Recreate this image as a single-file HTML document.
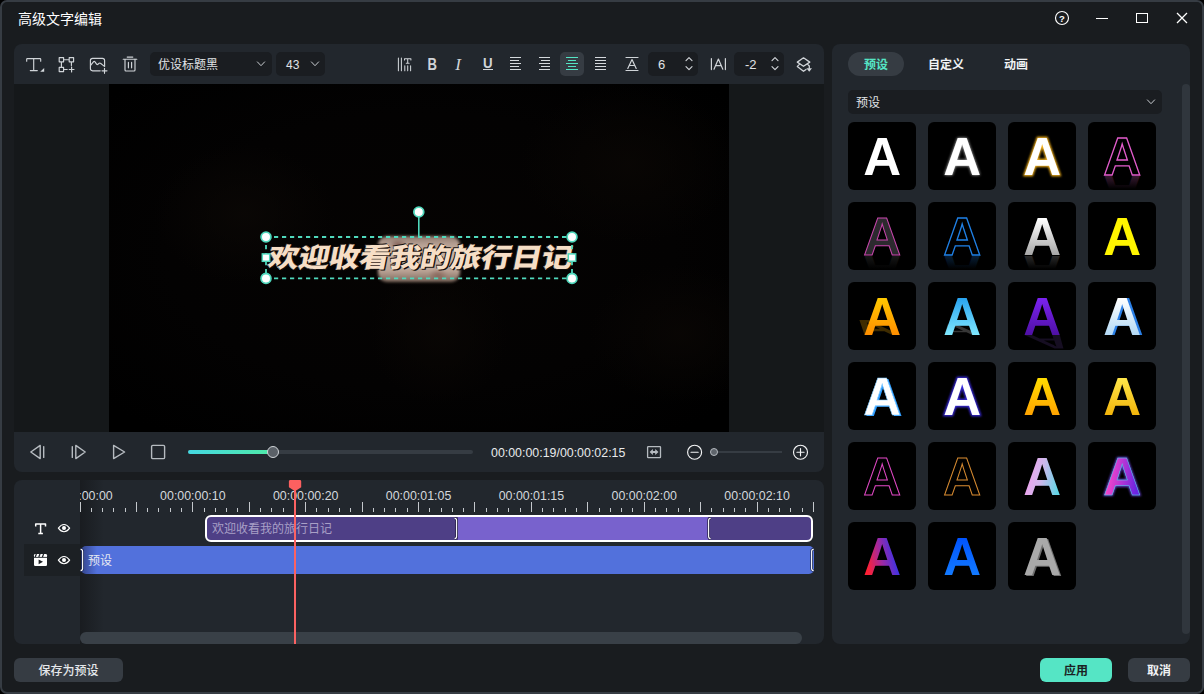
<!DOCTYPE html><html lang="zh-CN"><head><meta charset="utf-8"><title>高级文字编辑</title><style>
*{box-sizing:border-box;margin:0;padding:0}
html,body{width:1204px;height:694px;overflow:hidden;background:#000;}
body{font-family:"Liberation Sans","Noto Sans CJK SC",sans-serif;color:#e8eaec;font-size:12px;position:relative}
.abs{position:absolute}
#win{position:absolute;left:0;top:0;width:1204px;height:694px;background:#191c1f;border:2px solid #363c43;border-radius:7px;overflow:hidden}
.panel{position:absolute;background:#22272d;border-radius:8px}
.t{position:absolute;white-space:nowrap;line-height:1}
svg{position:absolute;overflow:visible}
.ic{stroke:#d0d4d8;fill:none;stroke-width:1.15;stroke-linecap:round;stroke-linejoin:round}
.pb .ic{stroke:#b6bbc0;stroke-width:1.4}
.dd{position:absolute;background:#1a1d21;border-radius:5px}
.tile{position:absolute;width:68px;height:68px;background:#000;border-radius:6px;overflow:hidden}
.tile .a{position:absolute;left:0;top:0;width:68px;height:68px;font:bold 50px/68px "Liberation Sans",sans-serif;text-align:center;color:#fff}
.btn{position:absolute;height:24px;border-radius:6px;font-weight:bold;background:#363c43;color:#f0f2f4;font-size:12px;line-height:24px;padding-top:1px;text-align:center}
</style></head><body>
<div id="win"></div>
<div class="t" style="left:18px;top:12px;font-size:14px;color:#fff">高级文字编辑</div>
<svg style="left:1054px;top:10px" width="16" height="16" viewBox="0 0 16 16"><circle cx="8" cy="8" r="6.5" class="ic" style="stroke:#fff"/><text x="8" y="11.6" font-size="9.5" font-weight="bold" text-anchor="middle" fill="#fff" font-family="Liberation Sans, sans-serif">?</text></svg>
<div class="abs" style="left:1096px;top:18px;width:12px;height:1.4px;background:#fff"></div>
<div class="abs" style="left:1136px;top:13px;width:12px;height:10px;border:1.3px solid #fff"></div>
<svg style="left:1176px;top:12px" width="12" height="12" viewBox="0 0 12 12"><path d="M1 1L11 11M11 1L1 11" stroke="#fff" stroke-width="1.3" fill="none"/></svg>
<div class="panel" style="left:14px;top:44px;width:810px;height:428px;overflow:hidden">
<div class="abs" style="left:0;top:40px;width:810px;height:348px;background:#15181a"></div>
<div class="abs" id="video" style="left:95px;top:40px;width:620px;height:348px;background:#000;overflow:hidden">
<div class="abs" style="left:0;top:0;width:620px;height:348px;background:radial-gradient(ellipse 90px 70px at 135px 130px,rgba(10,7,5,.9),rgba(0,0,0,0)),radial-gradient(ellipse 110px 80px at 520px 80px,rgba(9,6,4,.9),rgba(0,0,0,0)),radial-gradient(ellipse 70px 70px at 330px 250px,rgba(9,6,4,.9),rgba(0,0,0,0)),radial-gradient(ellipse 90px 70px at 570px 250px,rgba(9,6,4,.9),rgba(0,0,0,0)),radial-gradient(ellipse 420px 230px at 50% 48%,#050302 0,#030202 60%,#000 100%)"></div>
<div class="abs" style="left:269px;top:152px;width:82px;height:46px;border-radius:9px;background:radial-gradient(ellipse 9px 6px at 20px 9px,rgba(110,72,64,.75),rgba(110,72,64,0)),radial-gradient(ellipse 10px 6px at 60px 39px,rgba(120,80,70,.7),rgba(120,80,70,0)),linear-gradient(180deg,#8f7a6e 0,#b9a396 20%,#cbb4a6 50%,#bca597 75%,#7d685c 100%);filter:blur(1.6px)"></div>
<div class="t" id="vt" style="left:157px;top:156px;font-family:'Liberation Sans','Noto Sans CJK SC',sans-serif;font-weight:900;font-size:30.6px;letter-spacing:-0.2px;color:#f6dec6;-webkit-text-stroke:0.9px #f6dec6;paint-order:stroke fill;transform-origin:0 100%;transform:skewX(-11deg) scaleY(0.87);text-shadow:1.6px 1.8px 0 #120e0b,0 0 1px #120e0b,-0.8px -0.8px 0 #120e0b">欢迎收看我的旅行日记</div>
<svg style="left:0px;top:0px" width="620" height="348" viewBox="0 0 620 348" ><path d="M157 153H463M157 194.4H463M157 153V194.4M463 153V194.4" stroke="#4fd8bc" stroke-width="1.8" stroke-dasharray="4.2 3.8" fill="none"/><path d="M309.8 128V153" stroke="#4fd8bc" stroke-width="1.6"/><circle cx="157" cy="153" r="4.9" fill="#fff" stroke="#4fd8bc" stroke-width="1.8"/><circle cx="463" cy="153" r="4.9" fill="#fff" stroke="#4fd8bc" stroke-width="1.8"/><circle cx="157" cy="194.4" r="4.9" fill="#fff" stroke="#4fd8bc" stroke-width="1.8"/><circle cx="463" cy="194.4" r="4.9" fill="#fff" stroke="#4fd8bc" stroke-width="1.8"/><circle cx="309.8" cy="128" r="4.9" fill="#fff" stroke="#4fd8bc" stroke-width="1.8"/><rect x="153.3" y="169.9" width="7.4" height="7.4" fill="#fff" stroke="#4fd8bc" stroke-width="1.5"/><rect x="459.3" y="169.9" width="7.4" height="7.4" fill="#fff" stroke="#4fd8bc" stroke-width="1.5"/></svg>
</div>
<svg style="left:10px;top:10px" width="22" height="22" viewBox="0 0 22 22" ><path class="ic" d="M2.7 7.2V5.2Q2.7 4.6 3.4 4.6H16Q16.7 4.6 16.7 5.2V7.2M9.7 4.6V16.6M6.3 16.6H13.3"/><path d="M20.2 14V17.8H16.2Z" fill="#d5d9dd"/></svg>
<svg style="left:42px;top:10px" width="22" height="22" viewBox="0 0 22 22" ><path class="ic" d="M3.2 3.6h4.4v4.2h-4.4zM13.2 3.6h4.4v4.2h-4.4zM3.2 13.4h4.4v4.2h-4.4zM7.6 5.7H13.2M5.4 7.8V13.4M15.4 7.8V11.6M7.6 15.5H11.2M13.2 15.5H18M15.6 13.1V17.9"/></svg>
<svg style="left:74px;top:10px" width="22" height="22" viewBox="0 0 22 22" ><path class="ic" d="M12.2 16.8H4.6Q2.4 16.8 2.4 14.6V6.6Q2.4 4.4 4.6 4.4H14.4Q16.6 4.4 16.6 6.6V12.4M2.6 11.4L5.6 7.6Q6.2 7 6.8 7.7L8.6 10.2Q9.2 10.9 9.9 10.3L11.2 9.2Q11.9 8.7 12.5 9.3L16.4 12.4M14 16.8H19M16.5 14.3V19.3"/></svg>
<svg style="left:106px;top:10px" width="22" height="22" viewBox="0 0 22 22" ><path class="ic" d="M3.2 5.2H16.8M7.2 3.1H12.8M5 5.2V16Q5 17 6 17H14Q15 17 15 16V5M8.4 8.4V13.8M11.6 8.4V13.8"/></svg>
<div class="dd" style="left:136px;top:8px;width:122px;height:24px"></div>
<div class="t" style="left:144px;top:15px;font-size:12px;color:#e0e3e6">优设标题黑</div>
<svg style="left:241.7px;top:15px" width="10" height="10" viewBox="0 0 10 10" ><path class="ic" d="M1.4 2.9L5 6.7L8.6 2.9" style="stroke-width:1;stroke:#c8ccd0"/></svg>
<div class="dd" style="left:262px;top:8px;width:49px;height:24px"></div>
<div class="t" style="left:272px;top:15px;font-size:12px;color:#e0e3e6">43</div>
<svg style="left:295.8px;top:15px" width="10" height="10" viewBox="0 0 10 10" ><path class="ic" d="M1.4 2.9L5 6.7L8.6 2.9" style="stroke-width:1;stroke:#c8ccd0"/></svg>
<svg style="left:380px;top:10px" width="22" height="22" viewBox="0 0 22 22" ><path class="ic" d="M4.4 4V16.8M7.4 4V16.8M10.5 6V4.7H16.9V6M13.7 4.7V9.3M12.3 9.3H15.1M10.8 11.7V16.8M13.7 11.7V16.8M16.6 11.7V16.8" style="stroke-width:1.05"/></svg>
<svg style="left:410px;top:10px" width="16" height="22" viewBox="0 0 16 22" ><text x="3.4" y="15.9" font-family="Liberation Sans, sans-serif" font-weight="bold" font-size="16.4" fill="#d0d4d8" transform="translate(3.4 0) scale(0.8 1) translate(-3.4 0)">B</text></svg>
<svg style="left:438px;top:10px" width="16" height="22" viewBox="0 0 16 22" ><text x="3.2" y="15.9" font-family="Liberation Serif, serif" font-style="italic" font-size="17" fill="#d0d4d8">I</text></svg>
<svg style="left:466px;top:10px" width="16" height="22" viewBox="0 0 16 22" ><text x="3" y="13.8" font-family="Liberation Sans, sans-serif" font-weight="bold" font-size="14" fill="#d0d4d8" transform="translate(3 0) scale(0.95 1) translate(-3 0)">U</text></svg>
<div class="abs" style="left:469px;top:25px;width:10px;height:1px;background:#d0d4d8"></div>
<svg style="left:495px;top:10px" width="13" height="22" viewBox="0 0 13 22" ><path d="M1 3.5H12M1 6.5H10M1 9.5H12M1 12.5H10M1 15.5H12" stroke="#d5d9dd" stroke-width="1" fill="none" shape-rendering="crispEdges"/></svg>
<svg style="left:524px;top:10px" width="13" height="22" viewBox="0 0 13 22" ><path d="M1 3.5H12M3 6.5H12M1 9.5H12M3 12.5H12M1 15.5H12" stroke="#d5d9dd" stroke-width="1" fill="none" shape-rendering="crispEdges"/></svg>
<div class="abs" style="left:546px;top:8px;width:24px;height:24px;border-radius:5px;background:#363c43"></div>
<svg style="left:551px;top:10px" width="14" height="22" viewBox="0 0 14 22" ><path d="M1 3.5H13M3 6.5H11M1 9.5H13M3 12.5H11M1 15.5H13" stroke="#55e5c5" stroke-width="1" fill="none" shape-rendering="crispEdges"/></svg>
<svg style="left:580px;top:10px" width="13" height="22" viewBox="0 0 13 22" ><path d="M1 3.5H12M1 6.5H12M1 9.5H12M1 12.5H12M1 15.5H12" stroke="#d5d9dd" stroke-width="1" fill="none" shape-rendering="crispEdges"/></svg>
<svg style="left:608px;top:10px" width="20" height="22" viewBox="0 0 20 22" ><path class="ic" d="M4 3.5H16M4 16.5H16M5.8 14.4L10 5.6L14.2 14.4M7.3 11.5H12.7" style="stroke-width:1.2"/></svg>
<div class="dd" style="left:634px;top:8px;width:50px;height:24px"></div>
<div class="t" style="left:644px;top:14px;font-size:13px;color:#e0e3e6">6</div>
<svg style="left:670px;top:10px" width="10" height="22" viewBox="0 0 10 22" ><path class="ic" d="M2 6.6L5 3.6L8 6.6M2 12.6L5 15.6L8 12.6"/></svg>
<svg style="left:694px;top:10px" width="20" height="22" viewBox="0 0 20 22" ><path class="ic" d="M3.4 4.6V15.6M17.4 4.6V15.6M6 15.2L10.4 5L14.8 15.2M7.6 11.6H13.2" style="stroke-width:1.2"/></svg>
<div class="dd" style="left:720px;top:8px;width:50px;height:24px"></div>
<div class="t" style="left:731px;top:14px;font-size:13px;color:#e0e3e6">-2</div>
<svg style="left:756px;top:10px" width="10" height="22" viewBox="0 0 10 22" ><path class="ic" d="M2 6.6L5 3.6L8 6.6M2 12.6L5 15.6L8 12.6"/></svg>
<svg style="left:780px;top:10px" width="22" height="22" viewBox="0 0 22 22" ><path class="ic" d="M3.3 8.1L9.5 3.8L15.8 8.1L9.5 12.3ZM5.2 10.6L3.3 12.4L9.5 17.3L12 15.4M14 10.6L15.3 12V14.4" style="stroke-width:1.3"/><path d="M12.4 14.3H18L15.2 17.8Z" fill="#d0d4d8"/></svg>
<div class="pb">
<svg style="left:12px;top:397px" width="22" height="22" viewBox="0 0 22 22" ><path class="ic" d="M14.2 4.4V17.6L4.8 11ZM17.7 5.6V16.4"/></svg>
<svg style="left:53px;top:397px" width="22" height="22" viewBox="0 0 22 22" ><path class="ic" d="M8.8 4.4V17.6L18.2 11ZM5.3 5.6V16.4"/></svg>
<svg style="left:93px;top:397px" width="22" height="22" viewBox="0 0 22 22" ><path class="ic" d="M6.6 4.4V17.6L17.6 11Z"/></svg>
<svg style="left:133px;top:397px" width="22" height="22" viewBox="0 0 22 22" ><rect class="ic" x="4.6" y="4.4" width="13" height="13.2" rx="1.2"/></svg>
</div>
<div class="abs" style="left:174px;top:406px;width:285px;height:4px;border-radius:2px;background:#363c43"></div>
<div class="abs" style="left:174px;top:406px;width:86px;height:4px;border-radius:2px;background:linear-gradient(90deg,#45d8e2,#4feaa6)"></div>
<div class="abs" style="left:253px;top:402px;width:12px;height:12px;border-radius:6px;background:#5b6168;border:1.6px solid #d0d4d8"></div>
<div class="t" style="left:477px;top:403px;font-size:12.4px;color:#e8eaec">00:00:00:19/00:00:02:15</div>
<svg style="left:630px;top:397px" width="22" height="22" viewBox="0 0 22 22" ><rect class="ic" x="3.6" y="5.6" width="12.9" height="11" rx="0.6" style="stroke:#b6bbc0;stroke-width:1.3"/><path d="M5.6 11.1L8.9 8.1V10.1H11.2V8.1L14.5 11.1L11.2 14.1V12.1H8.9V14.1Z" fill="#b6bbc0"/></svg>
<svg style="left:670px;top:397px" width="22" height="22" viewBox="0 0 22 22" ><circle class="ic" cx="10.6" cy="11.2" r="7" style="stroke:#f4f5f6"/><path class="ic" d="M7 11.2H14.2" style="stroke:#f4f5f6"/></svg>
<div class="abs" style="left:702px;top:407px;width:66px;height:2px;background:#363c43"></div>
<div class="abs" style="left:696px;top:404px;width:8px;height:8px;border-radius:4px;background:#5e646b;border:1.6px solid #b4b9bf"></div>
<svg style="left:776px;top:397px" width="22" height="22" viewBox="0 0 22 22" ><circle class="ic" cx="10.5" cy="11.2" r="7" style="stroke:#f4f5f6"/><path class="ic" d="M6.9 11.2H14.1M10.5 7.6V14.8" style="stroke:#f4f5f6"/></svg>
</div>
<div class="panel" style="left:14px;top:480px;width:810px;height:164px;overflow:hidden">
<div class="abs" style="left:66px;top:0;width:24px;height:164px;background:linear-gradient(90deg,#191c20,#22272d)"></div>
<div class="abs" style="left:10px;top:64px;width:56px;height:32px;background:#1c2024"></div>
<div class="abs" style="left:66px;top:0;width:740px;height:34px;overflow:hidden">
<div class="t" style="left:-40px;top:10px;width:80px;text-align:center;font-size:12.4px;color:#d5d9dd">00:00:00:00</div>
<div class="t" style="left:72.85px;top:10px;width:80px;text-align:center;font-size:12.4px;color:#d5d9dd">00:00:00:10</div>
<div class="t" style="left:185.7px;top:10px;width:80px;text-align:center;font-size:12.4px;color:#d5d9dd">00:00:00:20</div>
<div class="t" style="left:298.55px;top:10px;width:80px;text-align:center;font-size:12.4px;color:#d5d9dd">00:00:01:05</div>
<div class="t" style="left:411.4px;top:10px;width:80px;text-align:center;font-size:12.4px;color:#d5d9dd">00:00:01:15</div>
<div class="t" style="left:524.25px;top:10px;width:80px;text-align:center;font-size:12.4px;color:#d5d9dd">00:00:02:00</div>
<div class="t" style="left:637.1px;top:10px;width:80px;text-align:center;font-size:12.4px;color:#d5d9dd">00:00:02:10</div>
<svg style="left:0;top:0" width="740" height="34" viewBox="0 0 740 34"><path d="M0.5 22V32M11.5 27.5V32M22.5 27.5V32M33.5 27.5V32M45.5 27.5V32M56.5 22V32M67.5 27.5V32M78.5 27.5V32M90.5 27.5V32M101.5 27.5V32M112.5 22V32M124.5 27.5V32M135.5 27.5V32M146.5 27.5V32M157.5 27.5V32M169.5 22V32M180.5 27.5V32M191.5 27.5V32M203.5 27.5V32M214.5 27.5V32M225.5 22V32M236.5 27.5V32M248.5 27.5V32M259.5 27.5V32M270.5 27.5V32M282.5 22V32M293.5 27.5V32M304.5 27.5V32M315.5 27.5V32M327.5 27.5V32M338.5 22V32M349.5 27.5V32M361.5 27.5V32M372.5 27.5V32M383.5 27.5V32M394.5 22V32M406.5 27.5V32M417.5 27.5V32M428.5 27.5V32M440.5 27.5V32M451.5 22V32M462.5 27.5V32M473.5 27.5V32M485.5 27.5V32M496.5 27.5V32M507.5 22V32M519.5 27.5V32M530.5 27.5V32M541.5 27.5V32M552.5 27.5V32M564.5 22V32M575.5 27.5V32M586.5 27.5V32M598.5 27.5V32M609.5 27.5V32M620.5 22V32M631.5 27.5V32M643.5 27.5V32M654.5 27.5V32M665.5 27.5V32M677.5 22V32M688.5 27.5V32M699.5 27.5V32M710.5 27.5V32M722.5 27.5V32M733.5 22V32" stroke="#c4c8cc" stroke-width="1" fill="none" shape-rendering="crispEdges"/></svg>
</div>
<svg style="left:16px;top:38px" width="20" height="20" viewBox="0 0 20 20" ><path d="M5.7 8.6V6H15.5V8.6M10.6 6V15.4M8.3 15.4H12.9" stroke="#fff" stroke-width="1.5" fill="none" stroke-linejoin="round"/></svg>
<svg style="left:40px;top:38px" width="20" height="20" viewBox="0 0 20 20" ><path d="M4.4 10.1Q7 6.5 10 6.5Q13 6.5 15.6 10.1Q13 13.7 10 13.7Q7 13.7 4.4 10.1Z" stroke="#fff" stroke-width="1.15" fill="none"/><circle cx="10" cy="10.1" r="2" fill="#fff"/></svg>
<svg style="left:40px;top:70px" width="20" height="20" viewBox="0 0 20 20" ><path d="M4.4 10.1Q7 6.5 10 6.5Q13 6.5 15.6 10.1Q13 13.7 10 13.7Q7 13.7 4.4 10.1Z" stroke="#fff" stroke-width="1.15" fill="none"/><circle cx="10" cy="10.1" r="2" fill="#fff"/></svg>
<svg style="left:16px;top:70px" width="20" height="20" viewBox="0 0 20 20" ><path d="M4 5.2Q4 4 5.2 4H15.8Q17 4 17 5.2V14.8Q17 16 15.8 16H5.2Q4 16 4 14.8Z" fill="#fff"/><path d="M6.4 4L5.2 7M10 4L8.8 7M13.6 4L12.4 7" stroke="#22272d" stroke-width="1.3"/><path d="M4 7.4H17" stroke="#22272d" stroke-width="0.9"/><path d="M8.6 9.4V14.2L13 11.8Z" fill="#1b1f23"/></svg>
<div class="abs" style="left:191px;top:35px;width:608px;height:27px;border:2px solid #fff;border-radius:6px;background:#4e3f86;overflow:hidden">
<div class="abs" style="left:251px;top:0;width:250px;height:23px;background:#7862cd"></div>
<div class="t" style="left:5px;top:6px;font-size:12px;color:#a9a0c6">欢迎收看我的旅行日记</div>
</div>
<svg style="left:437px;top:36px" width="8" height="26" viewBox="0 0 8 26" ><path d="M3.6 2.4Q5.6 2.4 5.6 4.4V20.6Q5.6 22.6 3.6 22.6" stroke="#2a2348" stroke-width="2.6" fill="none"/><path d="M3.6 2.4Q5.6 2.4 5.6 4.4V20.6Q5.6 22.6 3.6 22.6" stroke="#fff" stroke-width="1.1" fill="none"/></svg>
<svg style="left:692px;top:36px" width="8" height="26" viewBox="0 0 8 26" ><path d="M4.6 2.4Q2.6 2.4 2.6 4.4V20.6Q2.6 22.6 4.6 22.6" stroke="#2a2348" stroke-width="2.6" fill="none"/><path d="M4.6 2.4Q2.6 2.4 2.6 4.4V20.6Q2.6 22.6 4.6 22.6" stroke="#fff" stroke-width="1.1" fill="none"/></svg>
<div class="abs" style="left:67px;top:66px;width:733px;height:28px;border-radius:5px;background:linear-gradient(90deg,#33438a 0,#5271dc 16px);overflow:hidden">
<div class="t" style="left:7px;top:9px;font-size:12px;color:#e6e9f2">预设</div>
</div>
<svg style="left:65px;top:67px" width="8" height="28" viewBox="0 0 8 28" ><path d="M1.6 2.4Q3.6 2.4 3.6 4.4V21.6Q3.6 23.6 1.6 23.6" stroke="#1f2a55" stroke-width="2.6" fill="none"/><path d="M1.6 2.4Q3.6 2.4 3.6 4.4V21.6Q3.6 23.6 1.6 23.6" stroke="#fff" stroke-width="1.1" fill="none"/></svg>
<svg style="left:794px;top:67px" width="8" height="28" viewBox="0 0 8 28" ><path d="M5.6 2.4Q3.6 2.4 3.6 4.4V21.6Q3.6 23.6 5.6 23.6" stroke="#1f2a55" stroke-width="2.6" fill="none"/><path d="M5.6 2.4Q3.6 2.4 3.6 4.4V21.6Q3.6 23.6 5.6 23.6" stroke="#fff" stroke-width="1.1" fill="none"/></svg>
<div class="abs" style="left:66px;top:152px;width:722px;height:12px;border-radius:6px;background:#394047"></div>
<div class="abs" style="left:280px;top:4px;width:2px;height:160px;background:#fb6262"></div>
<svg style="left:274px;top:-1px" width="14" height="14" viewBox="0 0 14 14" ><path d="M0.9 2.4Q0.9 1 2.3 1H11.8Q13.2 1 13.2 2.4V8.2L7.05 12.2L0.9 8.2Z" fill="#fd6060"/></svg>
</div>
<div class="panel" style="left:832px;top:44px;width:358px;height:600px;overflow:hidden">
<div class="abs" style="left:16px;top:8px;width:56px;height:24px;border-radius:12px;background:#363c43"></div>
<div class="t" style="left:16px;top:15px;width:56px;text-align:center;font-size:12px;font-weight:bold;color:#55e5c5">预设</div>
<div class="t" style="left:84px;top:15px;width:60px;text-align:center;font-size:12px;font-weight:bold;color:#f0f2f4">自定义</div>
<div class="t" style="left:154px;top:15px;width:60px;text-align:center;font-size:12px;font-weight:bold;color:#f0f2f4">动画</div>
<div class="dd" style="left:16px;top:46px;width:314px;height:24px"></div>
<div class="t" style="left:24px;top:53px;font-size:12px;color:#e0e3e6">预设</div>
<svg style="left:313.5px;top:53.2px" width="10" height="10" viewBox="0 0 10 10" ><path class="ic" d="M1.4 2.9L5 6.7L8.6 2.9" style="stroke-width:1;stroke:#c8ccd0"/></svg>
<div class="abs" style="left:350px;top:40px;width:8px;height:550px;border-radius:4px;background:#30363d"></div>
<svg style="left:16px;top:78px" width="68" height="68" viewBox="0 0 68 68"><defs><clipPath id="cp0"><rect width="68" height="68" rx="6"/></clipPath></defs><g clip-path="url(#cp0)"><rect width="68" height="68" fill="#000"/><text x="34.3" y="53.4" transform="translate(0 53.4) scale(1 1.035) translate(0 -53.4)" text-anchor="middle" font-family="Liberation Sans, sans-serif" font-weight="bold" font-size="52.5" fill="#fff">A</text></g></svg>
<svg style="left:96px;top:78px" width="68" height="68" viewBox="0 0 68 68"><defs><filter id="g2" x="-30%" y="-30%" width="160%" height="160%"><feGaussianBlur stdDeviation="1.6"/></filter><clipPath id="cp1"><rect width="68" height="68" rx="6"/></clipPath></defs><g clip-path="url(#cp1)"><rect width="68" height="68" fill="#000"/><text x="34.3" y="53.4" transform="translate(0 53.4) scale(1 1.035) translate(0 -53.4)" text-anchor="middle" font-family="Liberation Sans, sans-serif" font-weight="bold" font-size="52.5" fill="#fff" filter="url(#g2)" opacity="0.8">A</text><text x="34.3" y="53.4" transform="translate(0 53.4) scale(1 1.035) translate(0 -53.4)" text-anchor="middle" font-family="Liberation Sans, sans-serif" font-weight="bold" font-size="52.5" fill="#fff">A</text></g></svg>
<svg style="left:176px;top:78px" width="68" height="68" viewBox="0 0 68 68"><defs><filter id="g3" x="-30%" y="-30%" width="160%" height="160%"><feGaussianBlur stdDeviation="0.8"/></filter><clipPath id="cp2"><rect width="68" height="68" rx="6"/></clipPath></defs><g clip-path="url(#cp2)"><rect width="68" height="68" fill="#000"/><text x="34.3" y="53.4" transform="translate(0 53.4) scale(1 1.035) translate(0 -53.4)" text-anchor="middle" font-family="Liberation Sans, sans-serif" font-weight="bold" font-size="52.5" fill="#f5b21e" stroke="#f5b21e" stroke-width="2.2" filter="url(#g3)">A</text><text x="34.3" y="53.4" transform="translate(0 53.4) scale(1 1.035) translate(0 -53.4)" text-anchor="middle" font-family="Liberation Sans, sans-serif" font-weight="bold" font-size="52.5" fill="#fff">A</text></g></svg>
<svg style="left:256px;top:78px" width="68" height="68" viewBox="0 0 68 68"><defs><linearGradient id="r4" x1="0" y1="0" x2="0" y2="1"><stop offset="0" stop-color="#e268c8" stop-opacity="0"/><stop offset="0.6" stop-color="#e268c8" stop-opacity="0"/><stop offset="1" stop-color="#e268c8" stop-opacity="0.45"/></linearGradient><clipPath id="cp3"><rect width="68" height="68" rx="6"/></clipPath></defs><g clip-path="url(#cp3)"><rect width="68" height="68" fill="#000"/><g transform="translate(0 107.6) scale(1 -1)"><text x="34.3" y="53.4" transform="translate(0 53.4) scale(1 1.035) translate(0 -53.4)" text-anchor="middle" font-family="Liberation Sans, sans-serif" font-weight="bold" font-size="52.5" fill="url(#r4)">A</text></g><text x="34.3" y="53.4" transform="translate(0 53.4) scale(1 1.035) translate(0 -53.4)" text-anchor="middle" font-family="Liberation Sans, sans-serif" font-weight="bold" font-size="52.5" fill="#000" stroke="#e25ccb" stroke-width="1.3">A</text></g></svg>
<svg style="left:16px;top:158px" width="68" height="68" viewBox="0 0 68 68"><defs><linearGradient id="r5" x1="0" y1="0" x2="0" y2="1"><stop offset="0.6" stop-color="#555" stop-opacity="0"/><stop offset="1" stop-color="#555" stop-opacity="0.5"/></linearGradient><clipPath id="cp4"><rect width="68" height="68" rx="6"/></clipPath></defs><g clip-path="url(#cp4)"><rect width="68" height="68" fill="#000"/><g transform="translate(0 107.6) scale(1 -1)"><text x="34.3" y="53.4" transform="translate(0 53.4) scale(1 1.035) translate(0 -53.4)" text-anchor="middle" font-family="Liberation Sans, sans-serif" font-weight="bold" font-size="52.5" fill="url(#r5)">A</text></g><text x="34.3" y="53.4" transform="translate(0 53.4) scale(1 1.035) translate(0 -53.4)" text-anchor="middle" font-family="Liberation Sans, sans-serif" font-weight="bold" font-size="52.5" fill="#2c2a2e" stroke="#c846ac" stroke-width="1">A</text></g></svg>
<svg style="left:96px;top:158px" width="68" height="68" viewBox="0 0 68 68"><defs><linearGradient id="r6" x1="0" y1="0" x2="0" y2="1"><stop offset="0.6" stop-color="#1f7de0" stop-opacity="0"/><stop offset="1" stop-color="#1f7de0" stop-opacity="0.45"/></linearGradient><clipPath id="cp5"><rect width="68" height="68" rx="6"/></clipPath></defs><g clip-path="url(#cp5)"><rect width="68" height="68" fill="#000"/><g transform="translate(0 107.6) scale(1 -1)"><text x="34.3" y="53.4" transform="translate(0 53.4) scale(1 1.035) translate(0 -53.4)" text-anchor="middle" font-family="Liberation Sans, sans-serif" font-weight="bold" font-size="52.5" fill="url(#r6)">A</text></g><text x="34.3" y="53.4" transform="translate(0 53.4) scale(1 1.035) translate(0 -53.4)" text-anchor="middle" font-family="Liberation Sans, sans-serif" font-weight="bold" font-size="52.5" fill="#000" stroke="#1f80e6" stroke-width="1.3">A</text></g></svg>
<svg style="left:176px;top:158px" width="68" height="68" viewBox="0 0 68 68"><defs><linearGradient id="f7" x1="0" y1="0" x2="0" y2="1"><stop offset="0.2" stop-color="#ffffff"/><stop offset="0.8" stop-color="#a8a8a8"/></linearGradient><linearGradient id="r7" x1="0" y1="0" x2="0" y2="1"><stop offset="0.6" stop-color="#aaa" stop-opacity="0"/><stop offset="1" stop-color="#aaa" stop-opacity="0.45"/></linearGradient><clipPath id="cp6"><rect width="68" height="68" rx="6"/></clipPath></defs><g clip-path="url(#cp6)"><rect width="68" height="68" fill="#000"/><g transform="translate(0 107.6) scale(1 -1)"><text x="34.3" y="53.4" transform="translate(0 53.4) scale(1 1.035) translate(0 -53.4)" text-anchor="middle" font-family="Liberation Sans, sans-serif" font-weight="bold" font-size="52.5" fill="url(#r7)">A</text></g><text x="34.3" y="53.4" transform="translate(0 53.4) scale(1 1.035) translate(0 -53.4)" text-anchor="middle" font-family="Liberation Sans, sans-serif" font-weight="bold" font-size="52.5" fill="url(#f7)">A</text></g></svg>
<svg style="left:256px;top:158px" width="68" height="68" viewBox="0 0 68 68"><defs><clipPath id="cp7"><rect width="68" height="68" rx="6"/></clipPath></defs><g clip-path="url(#cp7)"><rect width="68" height="68" fill="#000"/><text x="34.3" y="53.4" transform="translate(0 53.4) scale(1 1.035) translate(0 -53.4)" text-anchor="middle" font-family="Liberation Sans, sans-serif" font-weight="bold" font-size="52.5" fill="#fff500">A</text></g></svg>
<svg style="left:16px;top:238px" width="68" height="68" viewBox="0 0 68 68"><defs><linearGradient id="f9" x1="0" y1="0" x2="0" y2="1"><stop offset="0.2" stop-color="#ffc800"/><stop offset="0.85" stop-color="#ff8a00"/></linearGradient><clipPath id="cp8"><rect width="68" height="68" rx="6"/></clipPath></defs><g clip-path="url(#cp8)"><rect width="68" height="68" fill="#000"/><g transform="translate(0 53.4) matrix(1 0 0.49 0.4 0 0) translate(0 -53.4)"><text x="34.3" y="53.4" transform="translate(0 53.4) scale(1 1.035) translate(0 -53.4)" text-anchor="middle" font-family="Liberation Sans, sans-serif" font-weight="bold" font-size="52.5" fill="#6a4a00" opacity="0.6">A</text></g><text x="34.3" y="53.4" transform="translate(0 53.4) scale(1 1.035) translate(0 -53.4)" text-anchor="middle" font-family="Liberation Sans, sans-serif" font-weight="bold" font-size="52.5" fill="url(#f9)">A</text></g></svg>
<svg style="left:96px;top:238px" width="68" height="68" viewBox="0 0 68 68"><defs><linearGradient id="f10" x1="0" y1="0" x2="0" y2="1"><stop offset="0.2" stop-color="#2aa4f0"/><stop offset="0.85" stop-color="#86ecff"/></linearGradient><clipPath id="cp9"><rect width="68" height="68" rx="6"/></clipPath></defs><g clip-path="url(#cp9)"><rect width="68" height="68" fill="#000"/><g transform="translate(0 53.4) matrix(1 0 0.27 0.28 0 0) translate(0 -53.4)"><text x="34.3" y="53.4" transform="translate(0 53.4) scale(1 1.035) translate(0 -53.4)" text-anchor="middle" font-family="Liberation Sans, sans-serif" font-weight="bold" font-size="52.5" fill="#3c3c3c" opacity="0.9">A</text></g><text x="34.3" y="53.4" transform="translate(0 53.4) scale(1 1.035) translate(0 -53.4)" text-anchor="middle" font-family="Liberation Sans, sans-serif" font-weight="bold" font-size="52.5" fill="url(#f10)">A</text></g></svg>
<svg style="left:176px;top:238px" width="68" height="68" viewBox="0 0 68 68"><defs><linearGradient id="f11" x1="0" y1="0" x2="0" y2="1"><stop offset="0.2" stop-color="#7a22f0"/><stop offset="0.85" stop-color="#4c0fa0"/></linearGradient><clipPath id="cp10"><rect width="68" height="68" rx="6"/></clipPath></defs><g clip-path="url(#cp10)"><rect width="68" height="68" fill="#000"/><g transform="translate(0 53.4) matrix(1 0 -0.45 -0.36 0 0) translate(0 -53.4)"><text x="34.3" y="53.4" transform="translate(0 53.4) scale(1 1.035) translate(0 -53.4)" text-anchor="middle" font-family="Liberation Sans, sans-serif" font-weight="bold" font-size="52.5" fill="#2c1c44" opacity="0.5">A</text></g><text x="34.3" y="53.4" transform="translate(0 53.4) scale(1 1.035) translate(0 -53.4)" text-anchor="middle" font-family="Liberation Sans, sans-serif" font-weight="bold" font-size="52.5" fill="url(#f11)">A</text></g></svg>
<svg style="left:256px;top:238px" width="68" height="68" viewBox="0 0 68 68"><defs><linearGradient id="f12" x1="0" y1="0" x2="0" y2="1"><stop offset="0.2" stop-color="#ffffff"/><stop offset="0.9" stop-color="#a8d4f4"/></linearGradient><clipPath id="cp11"><rect width="68" height="68" rx="6"/></clipPath></defs><g clip-path="url(#cp11)"><rect width="68" height="68" fill="#000"/><g transform="translate(2.4 0)"><text x="34.3" y="53.4" transform="translate(0 53.4) scale(1 1.035) translate(0 -53.4)" text-anchor="middle" font-family="Liberation Sans, sans-serif" font-weight="bold" font-size="52.5" fill="#2a7fe6">A</text></g><text x="34.3" y="53.4" transform="translate(0 53.4) scale(1 1.035) translate(0 -53.4)" text-anchor="middle" font-family="Liberation Sans, sans-serif" font-weight="bold" font-size="52.5" fill="url(#f12)">A</text></g></svg>
<svg style="left:16px;top:318px" width="68" height="68" viewBox="0 0 68 68"><defs><clipPath id="cp12"><rect width="68" height="68" rx="6"/></clipPath></defs><g clip-path="url(#cp12)"><rect width="68" height="68" fill="#000"/><g transform="translate(1.6 0.6)"><text x="34.3" y="53.4" transform="translate(0 53.4) scale(1 1.035) translate(0 -53.4)" text-anchor="middle" font-family="Liberation Sans, sans-serif" font-weight="bold" font-size="52.5" fill="#2f9dff">A</text></g><text x="34.3" y="53.4" transform="translate(0 53.4) scale(1 1.035) translate(0 -53.4)" text-anchor="middle" font-family="Liberation Sans, sans-serif" font-weight="bold" font-size="52.5" fill="#fff" stroke="#7cc8ff" stroke-width="0.6">A</text></g></svg>
<svg style="left:96px;top:318px" width="68" height="68" viewBox="0 0 68 68"><defs><filter id="g14" x="-30%" y="-30%" width="160%" height="160%"><feGaussianBlur stdDeviation="0.9"/></filter><clipPath id="cp13"><rect width="68" height="68" rx="6"/></clipPath></defs><g clip-path="url(#cp13)"><rect width="68" height="68" fill="#000"/><text x="34.3" y="53.4" transform="translate(0 53.4) scale(1 1.035) translate(0 -53.4)" text-anchor="middle" font-family="Liberation Sans, sans-serif" font-weight="bold" font-size="52.5" fill="#3a2be0" stroke="#3a2be0" stroke-width="2.6" filter="url(#g14)">A</text><text x="34.3" y="53.4" transform="translate(0 53.4) scale(1 1.035) translate(0 -53.4)" text-anchor="middle" font-family="Liberation Sans, sans-serif" font-weight="bold" font-size="52.5" fill="#fff">A</text></g></svg>
<svg style="left:176px;top:318px" width="68" height="68" viewBox="0 0 68 68"><defs><linearGradient id="f15" x1="0" y1="0" x2="0" y2="1"><stop offset="0.2" stop-color="#ffdc00"/><stop offset="0.9" stop-color="#ff9a00"/></linearGradient><clipPath id="cp14"><rect width="68" height="68" rx="6"/></clipPath></defs><g clip-path="url(#cp14)"><rect width="68" height="68" fill="#000"/><text x="34.3" y="53.4" transform="translate(0 53.4) scale(1 1.035) translate(0 -53.4)" text-anchor="middle" font-family="Liberation Sans, sans-serif" font-weight="bold" font-size="52.5" fill="url(#f15)">A</text></g></svg>
<svg style="left:256px;top:318px" width="68" height="68" viewBox="0 0 68 68"><defs><linearGradient id="f16" x1="0" y1="0" x2="0" y2="1"><stop offset="0.2" stop-color="#ffe64a"/><stop offset="0.9" stop-color="#f0ac00"/></linearGradient><clipPath id="cp15"><rect width="68" height="68" rx="6"/></clipPath></defs><g clip-path="url(#cp15)"><rect width="68" height="68" fill="#000"/><text x="34.3" y="53.4" transform="translate(0 53.4) scale(1 1.035) translate(0 -53.4)" text-anchor="middle" font-family="Liberation Sans, sans-serif" font-weight="bold" font-size="52.5" fill="url(#f16)">A</text></g></svg>
<svg style="left:16px;top:398px" width="68" height="68" viewBox="0 0 68 68"><defs><clipPath id="cp16"><rect width="68" height="68" rx="6"/></clipPath></defs><g clip-path="url(#cp16)"><rect width="68" height="68" fill="#000"/><text x="34.3" y="53.4" transform="translate(0 53.4) scale(1 1.035) translate(0 -53.4)" text-anchor="middle" font-family="Liberation Sans, sans-serif" font-weight="bold" font-size="52.5" fill="#000" stroke="#e048c4" stroke-width="1">A</text></g></svg>
<svg style="left:96px;top:398px" width="68" height="68" viewBox="0 0 68 68"><defs><clipPath id="cp17"><rect width="68" height="68" rx="6"/></clipPath></defs><g clip-path="url(#cp17)"><rect width="68" height="68" fill="#000"/><text x="34.3" y="53.4" transform="translate(0 53.4) scale(1 1.035) translate(0 -53.4)" text-anchor="middle" font-family="Liberation Sans, sans-serif" font-weight="bold" font-size="52.5" fill="#000" stroke="#d68a30" stroke-width="1">A</text></g></svg>
<svg style="left:176px;top:398px" width="68" height="68" viewBox="0 0 68 68"><defs><linearGradient id="f19" x1="0" y1="0.3" x2="1" y2="0.6"><stop offset="0.1" stop-color="#f2a2ee"/><stop offset="0.5" stop-color="#cdb8ec"/><stop offset="0.95" stop-color="#62d6e6"/></linearGradient><clipPath id="cp18"><rect width="68" height="68" rx="6"/></clipPath></defs><g clip-path="url(#cp18)"><rect width="68" height="68" fill="#000"/><text x="34.3" y="53.4" transform="translate(0 53.4) scale(1 1.035) translate(0 -53.4)" text-anchor="middle" font-family="Liberation Sans, sans-serif" font-weight="bold" font-size="52.5" fill="url(#f19)">A</text></g></svg>
<svg style="left:256px;top:398px" width="68" height="68" viewBox="0 0 68 68"><defs><linearGradient id="f20" x1="0" y1="0.4" x2="1" y2="0.6"><stop offset="0.15" stop-color="#f244cc"/><stop offset="0.9" stop-color="#6a24e2"/></linearGradient><filter id="g20" x="-30%" y="-30%" width="160%" height="160%"><feGaussianBlur stdDeviation="0.8"/></filter><clipPath id="cp19"><rect width="68" height="68" rx="6"/></clipPath></defs><g clip-path="url(#cp19)"><rect width="68" height="68" fill="#000"/><text x="34.3" y="53.4" transform="translate(0 53.4) scale(1 1.035) translate(0 -53.4)" text-anchor="middle" font-family="Liberation Sans, sans-serif" font-weight="bold" font-size="52.5" fill="#7040ff" stroke="#7a50ff" stroke-width="2" filter="url(#g20)" opacity="0.8">A</text><text x="34.3" y="53.4" transform="translate(0 53.4) scale(1 1.035) translate(0 -53.4)" text-anchor="middle" font-family="Liberation Sans, sans-serif" font-weight="bold" font-size="52.5" fill="url(#f20)" stroke="#52d8e8" stroke-width="0.5">A</text></g></svg>
<svg style="left:16px;top:478px" width="68" height="68" viewBox="0 0 68 68"><defs><linearGradient id="f21" x1="0" y1="0.7" x2="1" y2="0.4"><stop offset="0.1" stop-color="#ff2034"/><stop offset="0.5" stop-color="#9a2aa8"/><stop offset="0.92" stop-color="#2a34f0"/></linearGradient><clipPath id="cp20"><rect width="68" height="68" rx="6"/></clipPath></defs><g clip-path="url(#cp20)"><rect width="68" height="68" fill="#000"/><text x="34.3" y="53.4" transform="translate(0 53.4) scale(1 1.035) translate(0 -53.4)" text-anchor="middle" font-family="Liberation Sans, sans-serif" font-weight="bold" font-size="52.5" fill="url(#f21)">A</text></g></svg>
<svg style="left:96px;top:478px" width="68" height="68" viewBox="0 0 68 68"><defs><linearGradient id="f22" x1="0" y1="0" x2="0" y2="1"><stop offset="0.2" stop-color="#0054ff"/><stop offset="0.9" stop-color="#1680ff"/></linearGradient><clipPath id="cp21"><rect width="68" height="68" rx="6"/></clipPath></defs><g clip-path="url(#cp21)"><rect width="68" height="68" fill="#000"/><text x="34.3" y="53.4" transform="translate(0 53.4) scale(1 1.035) translate(0 -53.4)" text-anchor="middle" font-family="Liberation Sans, sans-serif" font-weight="bold" font-size="52.5" fill="url(#f22)">A</text></g></svg>
<svg style="left:176px;top:478px" width="68" height="68" viewBox="0 0 68 68"><defs><clipPath id="cp22"><rect width="68" height="68" rx="6"/></clipPath></defs><g clip-path="url(#cp22)"><rect width="68" height="68" fill="#000"/><g transform="translate(1.4 0.4)"><text x="34.3" y="53.4" transform="translate(0 53.4) scale(1 1.035) translate(0 -53.4)" text-anchor="middle" font-family="Liberation Sans, sans-serif" font-weight="bold" font-size="52.5" fill="#6e6e6e">A</text></g><text x="34.3" y="53.4" transform="translate(0 53.4) scale(1 1.035) translate(0 -53.4)" text-anchor="middle" font-family="Liberation Sans, sans-serif" font-weight="bold" font-size="52.5" fill="#a9a9a9">A</text></g></svg>
</div>
<div class="btn" style="left:14px;top:658px;width:109px;font-weight:500;color:#e4e7ea">保存为预设</div>
<div class="btn" style="left:1040px;top:658px;width:72px;background:#55e5c5;color:#1b1f23">应用</div>
<div class="btn" style="left:1128px;top:658px;width:62px">取消</div>
</body></html>
